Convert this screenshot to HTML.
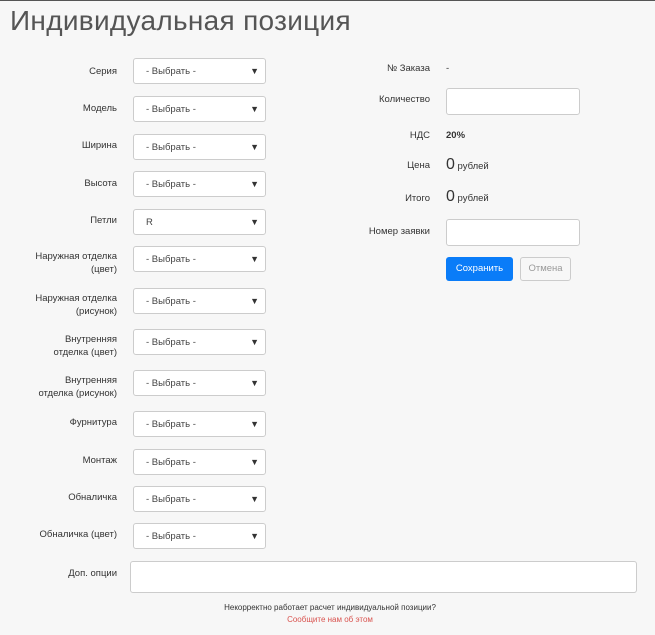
<!DOCTYPE html>
<html><head><meta charset="utf-8"><style>
*{box-sizing:border-box;margin:0;padding:0}
body{width:655px;height:635px;background:#f7f7f7;font-family:"Liberation Sans","Noto Sans CJK SC",sans-serif;color:#333;position:relative;overflow:hidden;border-top:1px solid #555}
.t{position:absolute;left:10px;top:4px;font-size:28px;font-weight:300;color:#555;letter-spacing:0.3px}
.l{position:absolute;right:538px;width:110px;text-align:right;font-size:9.5px;line-height:13px;color:#333}
.s{position:absolute;left:133px;width:133px;height:26px;background:#fff;border:1px solid #ccc;border-radius:3px;font-size:9.5px;padding:7px 0 0 12px;color:#444}
.s:after{content:"▼";position:absolute;right:6px;top:7px;font-size:9px;color:#333}
.r{position:absolute;right:225px;text-align:right;font-size:9.5px}
.i{position:absolute;left:446px;width:134px;height:27px;background:#fff;border:1px solid #ccc;border-radius:3px}
.v{position:absolute;left:446px;font-size:9.5px}
</style></head><body>
<div class="t">Индивидуальная позиция</div>

<div class="l" style="top:64px">Серия</div><div class="s" style="top:57px">- Выбрать -</div>
<div class="l" style="top:101px">Модель</div><div class="s" style="top:95px">- Выбрать -</div>
<div class="l" style="top:138px">Ширина</div><div class="s" style="top:133px">- Выбрать -</div>
<div class="l" style="top:176px">Высота</div><div class="s" style="top:170px">- Выбрать -</div>
<div class="l" style="top:213px">Петли</div><div class="s" style="top:208px">R</div>
<div class="l" style="top:249px">Наружная отделка<br>(цвет)</div><div class="s" style="top:245px">- Выбрать -</div>
<div class="l" style="top:291px">Наружная отделка<br>(рисунок)</div><div class="s" style="top:287px">- Выбрать -</div>
<div class="l" style="top:332px">Внутренняя<br>отделка (цвет)</div><div class="s" style="top:328px">- Выбрать -</div>
<div class="l" style="top:373px">Внутренняя<br>отделка (рисунок)</div><div class="s" style="top:369px">- Выбрать -</div>
<div class="l" style="top:415px">Фурнитура</div><div class="s" style="top:410px">- Выбрать -</div>
<div class="l" style="top:453px">Монтаж</div><div class="s" style="top:448px">- Выбрать -</div>
<div class="l" style="top:490px">Обналичка</div><div class="s" style="top:485px">- Выбрать -</div>
<div class="l" style="top:527px">Обналичка (цвет)</div><div class="s" style="top:522px">- Выбрать -</div>
<div class="l" style="top:566px">Доп. опции</div>
<div style="position:absolute;left:130px;top:560px;width:507px;height:32px;background:#fff;border:1px solid #ccc;border-radius:3px"></div>

<div class="r" style="top:62px">№ Заказа</div><div class="v" style="top:62px">-</div>
<div class="r" style="top:93px">Количество</div><div class="i" style="top:87px"></div>
<div class="r" style="top:129px">НДС</div><div class="v" style="top:129px;font-weight:bold">20%</div>
<div class="r" style="top:159px">Цена</div><div class="v" style="top:155px"><span style="font-size:16px">0</span> рублей</div>
<div class="r" style="top:192px">Итого</div><div class="v" style="top:187px"><span style="font-size:16px">0</span> рублей</div>
<div class="r" style="top:225px">Номер заявки</div><div class="i" style="top:218px"></div>
<div style="position:absolute;left:446px;top:256px;width:67px;height:24px;background:#0a7cf8;border-radius:3px;color:#fff;font-size:9.5px;text-align:center;line-height:24px">Сохранить</div>
<div style="position:absolute;left:520px;top:256px;width:51px;height:24px;border:1px solid #ccc;border-radius:3px;color:#999;font-size:9.5px;text-align:center;line-height:22px">Отмена</div>

<div style="position:absolute;left:130px;width:400px;top:602px;text-align:center;font-size:8px;color:#333">Некорректно работает расчет индивидуальной позиции?</div>
<div style="position:absolute;left:130px;width:400px;top:614px;text-align:center;font-size:8px;color:#d9534f">Сообщите нам об этом</div>
</body></html>
